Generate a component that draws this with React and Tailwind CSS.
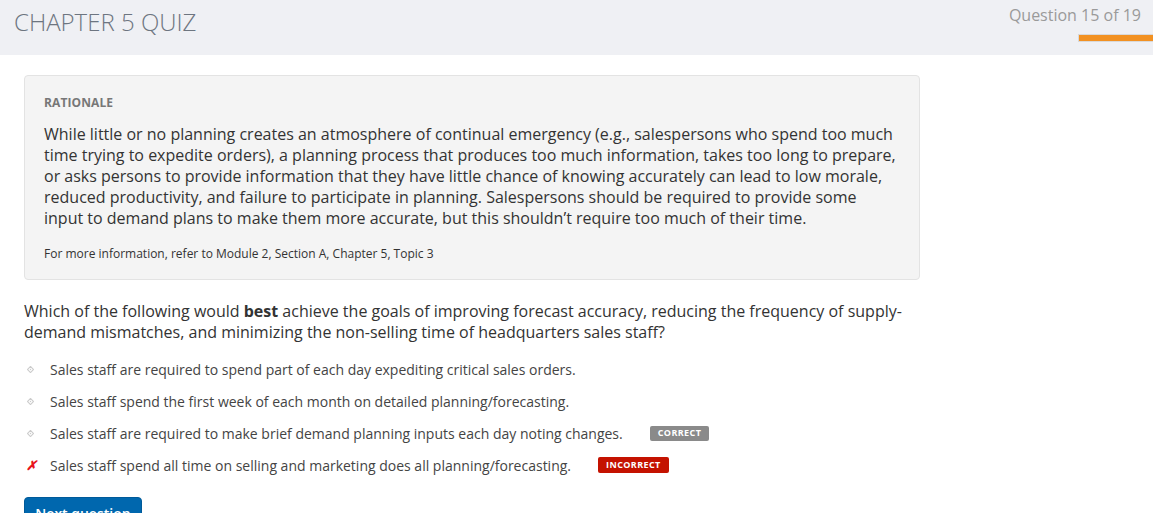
import React from "react";

const Bullet = () => (
  <svg width="7" height="7" viewBox="0 0 8 8" className="block">
    <path d="M4 0.5 L7.5 4 L4 7.5 L0.5 4 Z" fill="none" stroke="#cccccc" strokeWidth="1.3" />
    <circle cx="4" cy="4" r="0.8" fill="#cccccc" />
  </svg>
);

const options = [
  { text: "Sales staff are required to spend part of each day expediting critical sales orders." },
  { text: "Sales staff spend the first week of each month on detailed planning/forecasting." },
  { text: "Sales staff are required to make brief demand planning inputs each day noting changes.", badge: "correct" },
  { text: "Sales staff spend all time on selling and marketing does all planning/forecasting.", badge: "incorrect", wrong: true },
];

export default function App() {
  return (
    <div className="w-[1153px] h-[513px] overflow-hidden bg-white" style={{ fontFamily: '"Open Sans", "Liberation Sans", sans-serif' }}>
      <header className="h-[55px] bg-[#eff0f4] flex justify-between">
        <h1 className="pl-[14px] pt-[5px] text-[24px] font-light text-[#6d7580] leading-[33px]">CHAPTER 5 QUIZ</h1>
        <div className="flex flex-col items-end pt-[3px]">
          <div className="pr-[12px] text-[16px] text-[#9a9a9a] leading-[24px]">Question 15 of 19</div>
          <div className="mt-[7px] w-[75px] h-[8px] bg-[#f29122] border border-[#d9d9d9] border-r-0"></div>
        </div>
      </header>

      <main className="pl-[24px] pt-[20px]">
        <section className="w-[896px] bg-[#f4f4f4] border border-[#e3e3e3] rounded-[4px] px-[19px] pt-[18px] pb-[17px]">
          <div className="text-[12px] font-bold text-[#777] leading-[17px] tracking-[0.1px]">RATIONALE</div>
          <p className="mt-[13px] w-[852px] text-[16px] leading-[21px] text-[#333]">
            While little or no planning creates an atmosphere of continual emergency (e.g., salespersons who spend too much time trying to expedite orders), a planning process that produces too much information, takes too long to prepare, or asks persons to provide information that they have little chance of knowing accurately can lead to low morale, reduced productivity, and failure to participate in planning. Salespersons should be required to provide some input to demand plans to make them more accurate, but this shouldn’t require too much of their time.
          </p>
          <p className="mt-[16px] text-[12px] leading-[17px] text-[#333]">For more information, refer to Module 2, Section A, Chapter 5, Topic 3</p>
        </section>

        <p className="mt-[21px] w-[895px] text-[16px] leading-[21px] text-[#333]">
          Which of the following would <b className="font-bold">best</b> achieve the goals of improving forecast accuracy, reducing the frequency of supply-demand mismatches, and minimizing the non-selling time of headquarters sales staff?
        </p>

        <ul className="mt-[16px] flex flex-col gap-[12px]">
          {options.map((o, i) => (
            <li key={i} className="flex items-center h-[20px] text-[14px] text-[#444]">
              <span className="w-[26px] flex items-center pl-[3px]">
                {o.wrong ? (
                  <span className="text-[#e8141c] text-[13px] font-bold italic leading-none -ml-[1px]">✗</span>
                ) : (
                  <Bullet />
                )}
              </span>
              <span>{o.text}</span>
              {o.badge === "correct" && (
                <span className="ml-[27px] h-[15px] px-[8px] bg-[#8a8a8a] rounded-[2px] text-white text-[9px] font-bold tracking-[0.4px] flex items-center">CORRECT</span>
              )}
              {o.badge === "incorrect" && (
                <span className="ml-[27px] h-[16px] px-[8px] bg-[#c41200] rounded-[2px] text-white text-[9px] font-bold tracking-[0.4px] flex items-center">INCORRECT</span>
              )}
            </li>
          ))}
        </ul>

        <button className="mt-[22px] w-[118px] h-[34px] bg-[#0067ae] border border-[#005a99] rounded-[4px] text-white text-[14px] font-semibold leading-none">Next question</button>
      </main>
    </div>
  );
}
